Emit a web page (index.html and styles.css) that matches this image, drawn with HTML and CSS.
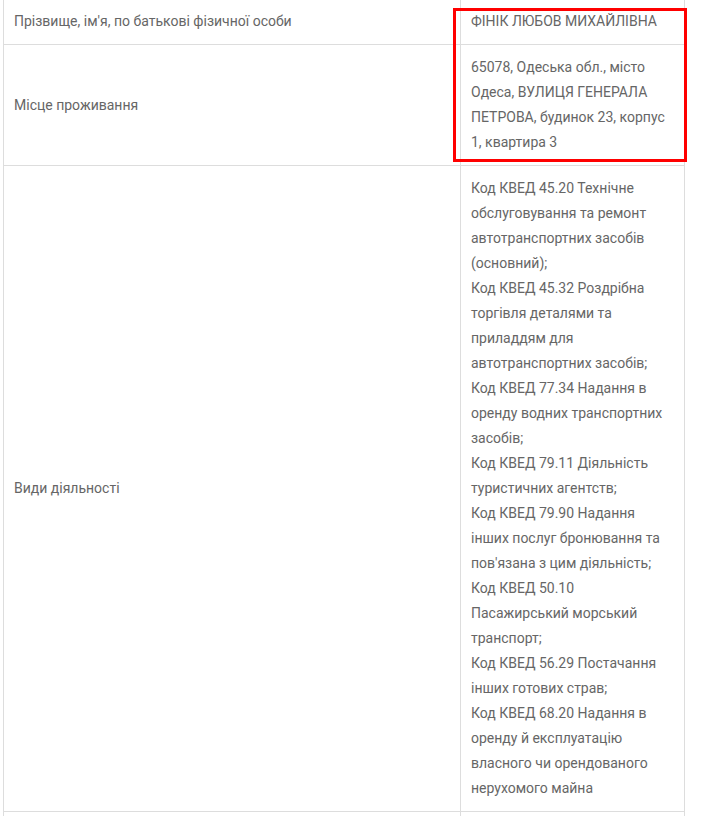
FILE: index.html
```html
<!DOCTYPE html>
<html lang="uk">
<head>
<meta charset="utf-8">
<title>Відомості про ФОП</title>
<link rel="stylesheet" href="styles.css">
</head>
<body>
<div class="wrap">
  <table class="info">
    <tbody>
      <tr>
        <td class="label">Прізвище, ім'я, по батькові фізичної особи</td>
        <td class="value">ФІНІК ЛЮБОВ МИХАЙЛІВНА</td>
      </tr>
      <tr>
        <td class="label">Місце проживання</td>
        <td class="value">65078, Одеська обл., місто<br>Одеса, ВУЛИЦЯ ГЕНЕРАЛА<br>ПЕТРОВА, будинок 23, корпус<br>1, квартира 3</td>
      </tr>
      <tr>
        <td class="label">Види діяльності</td>
        <td class="value">Код КВЕД 45.20 Технічне<br>обслуговування та ремонт<br>автотранспортних засобів<br>(основний);<br>Код КВЕД 45.32 Роздрібна<br>торгівля деталями та<br>приладдям для<br>автотранспортних засобів;<br>Код КВЕД 77.34 Надання в<br>оренду водних транспортних<br>засобів;<br>Код КВЕД 79.11 Діяльність<br>туристичних агентств;<br>Код КВЕД 79.90 Надання<br>інших послуг бронювання та<br>пов'язана з цим діяльність;<br>Код КВЕД 50.10<br>Пасажирський морський<br>транспорт;<br>Код КВЕД 56.29 Постачання<br>інших готових страв;<br>Код КВЕД 68.20 Надання в<br>оренду й експлуатацію<br>власного чи орендованого<br>нерухомого майна</td>
      </tr>
      <tr>
        <td class="label">&nbsp;</td>
        <td class="value">&nbsp;</td>
      </tr>
    </tbody>
  </table>
  <div class="highlight"></div>
</div>
</body>
</html>
```
FILE: styles.css
```css
html, body {
  margin: 0;
  padding: 0;
  background: #fff;
}

body {
  font-family: Roboto, "Liberation Sans", sans-serif;
  font-size: 14px;
  color: #666;
}

.wrap {
  position: relative;
  width: 682px;
  margin: -1px 0 0 3px;
}

.info {
  width: 682px;
  table-layout: fixed;
  border-collapse: separate;
  border-spacing: 0;
  border-left: 1px solid #ddd;
  border-right: 1px solid #ddd;
}

.info td {
  box-sizing: border-box;
  padding: 10px;
  line-height: 25px;
  border-bottom: 1px solid #ddd;
  vertical-align: middle;
  white-space: nowrap;
}

.info .label {
  width: 456px;
}

.info .value {
  width: 224px;
  border-left: 1px solid #ddd;
}

.highlight {
  position: absolute;
  left: 450px;
  top: 9px;
  width: 228px;
  height: 148px;
  border: 3px solid #f00;
  pointer-events: none;
}
```
